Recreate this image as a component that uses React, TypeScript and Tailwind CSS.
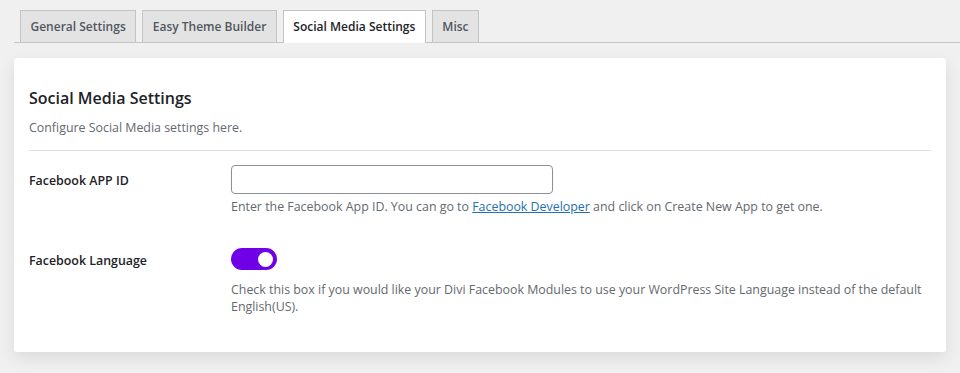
import { useState } from 'react';

const tabs = ['General Settings', 'Easy Theme Builder', 'Social Media Settings', 'Misc'];

export default function App() {
  const [lang, setLang] = useState(true);
  const active = 'Social Media Settings';

  return (
    <div
      className="min-h-[373px] bg-[#f0f0f1] text-[12.4px] text-[#1d2327]"
      style={{ fontFamily: '"Open Sans", "Noto Sans", sans-serif' }}
    >
      {/* Tabs */}
      <div className="ml-[14px] flex items-end gap-[6px] border-b border-[#c3c4c7] pt-[10px] pl-[6px]">
        {tabs.map((t) => (
          <div
            key={t}
            className={
              t === active
                ? '-mb-px flex h-[33px] items-center border border-b-0 border-[#c3c4c7] bg-white px-[9.5px] text-[12px] font-semibold text-[#1d2327]'
                : 'flex h-[32px] items-center border border-b-0 border-[#c3c4c7] bg-[#e3e3e3] px-[9.5px] text-[12px] font-semibold text-[#50575e]'
            }
          >
            {t}
          </div>
        ))}
      </div>

      {/* Card */}
      <div className="mx-[14px] mt-[15px] rounded-[3px] bg-white px-[15px] pt-[30px] pb-[37px] shadow-[0_6px_16px_rgba(0,0,0,0.09)]">
        <h2 className="text-[16px] font-semibold leading-[20px] text-[#1d2327]">Social Media Settings</h2>
        <p className="mt-[11px] leading-[18px] text-[#646970]">Configure Social Media settings here.</p>
        <div className="mt-[13px] border-t border-[#e0e0e0]" />

        <div className="mt-[14px] grid grid-cols-[202px_1fr]">
          <div className="pt-[7px] font-semibold">Facebook APP ID</div>
          <div>
            <input
              type="text"
              className="h-[29px] w-[322px] rounded-[4px] border border-[#8c8f94] bg-white px-2 outline-none"
            />
            <p className="mt-[4px] leading-[18px] text-[#646970]">
              Enter the Facebook App ID. You can go to{' '}
              <a href="#" className="text-[#2271b1] underline">
                Facebook Developer
              </a>{' '}
              and click on Create New App to get one.
            </p>
          </div>
        </div>

        <div className="mt-[32px] grid grid-cols-[202px_1fr]">
          <div className="pt-[4px] font-semibold">Facebook Language</div>
          <div>
            <button
              onClick={() => setLang(!lang)}
              className={`flex h-[22px] w-[46px] items-center rounded-full px-[4px] ${lang ? 'justify-end bg-[#7000e6]' : 'justify-start bg-[#c3c4c7]'}`}
            >
              <span className="block h-[15px] w-[15px] rounded-full bg-white" />
            </button>
            <p className="mt-[11px] leading-[17px] text-[#646970]">
              Check this box if you would like your Divi Facebook Modules to use your WordPress Site Language instead of the default English(US).
            </p>
          </div>
        </div>
      </div>
    </div>
  );
}
